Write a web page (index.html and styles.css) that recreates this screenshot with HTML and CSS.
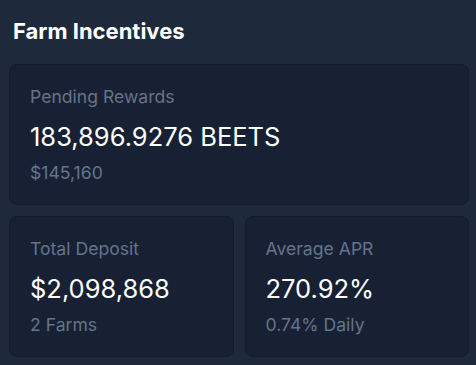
FILE: index.html
```html
<!DOCTYPE html>
<html>
<head>
    <title>Farm Incentives</title>
    <link rel="stylesheet" href="styles.css">
</head>
<body>
    <div class="panel">
        <h2 class="panel-title">Farm Incentives</h2>

        <div class="card">
            <div class="card-label">Pending Rewards</div>
            <div class="card-value">183,896.9276 BEETS</div>
            <div class="card-sub">$145,160</div>
        </div>

        <div class="row">
            <div class="card">
                <div class="card-label">Total Deposit</div>
                <div class="card-value">$2,098,868</div>
                <div class="card-sub">2 Farms</div>
            </div>
            <div class="card">
                <div class="card-label">Average APR</div>
                <div class="card-value">270.92%</div>
                <div class="card-sub">0.74% Daily</div>
            </div>
        </div>
    </div>
</body>
</html>
```

FILE: styles.css
```css
body {
    margin: 0;
    padding: 0;
    background-color: #1e293b;
    font-family: Inter, "Noto Sans", sans-serif;
    color: #fff;
}

.panel {
    padding: 17px 7px 0 9px;
}

.panel-title {
    margin: 0 0 19px 4px;
    font-size: 22px;
    line-height: 28px;
    font-weight: 700;
    color: #fff;
}

.card {
    background-color: #182133;
    border: 1px solid #141b2b;
    border-radius: 8px;
    padding: 20px 20px 19px;
    height: 141px;
    box-sizing: border-box;
}

.card-label {
    font-size: 17.6px;
    line-height: 24px;
    color: #64748b;
}

.card-value {
    font-size: 25.5px;
    line-height: 32px;
    margin: 12px 0 8px;
    color: #fff;
}

.card-sub {
    font-size: 17.6px;
    line-height: 24px;
    color: #64748b;
}

.row {
    display: grid;
    grid-template-columns: 1fr 1fr;
    gap: 11px;
    margin-top: 11px;
}
```
